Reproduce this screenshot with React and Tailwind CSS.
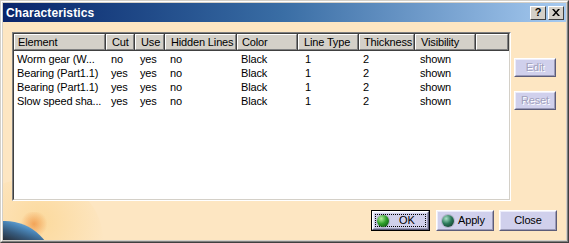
import React from "react";

const cols = [
  { h: "Element", w: "w-[92px]", pl: "pl-[3px]" },
  { h: "Cut", w: "w-[29px]", pl: "pl-[5px]" },
  { h: "Use", w: "w-[30px]", pl: "pl-[5px]" },
  { h: "Hidden Lines", w: "w-[72px]", pl: "pl-[5px]" },
  { h: "Color", w: "w-[61px]", pl: "pl-[4px]" },
  { h: "Line Type", w: "w-[61px]", pl: "pl-[5px]" },
  { h: "Thickness", w: "w-[56px]", pl: "pl-[4px]" },
  { h: "Visibility", w: "w-[61px]", pl: "pl-[5px]" },
];

const rows = [
  ["Worm gear (W...", "no", "yes", "no", "Black", "1", "2", "shown"],
  ["Bearing (Part1.1)", "yes", "yes", "no", "Black", "1", "2", "shown"],
  ["Bearing (Part1.1)", "yes", "yes", "no", "Black", "1", "2", "shown"],
  ["Slow speed sha...", "yes", "yes", "no", "Black", "1", "2", "shown"],
];

const dataPl = ["pl-[3px]", "pl-[5px]", "pl-[5px]", "pl-[5px]", "pl-[4px]", "pl-[7px]", "pl-[4px]", "pl-[5px]"];

function HeaderCell({ children, className }) {
  return (
    <div className={`${className} h-full flex items-center border-r border-b border-r-[#404040] border-b-[#404040] shrink-0`}>
      <div className="w-full h-full flex items-center overflow-hidden whitespace-nowrap border-t border-l border-t-white border-l-white border-r border-b border-r-[#808080] border-b-[#808080] bg-[#d4d0c8]">
        {children}
      </div>
    </div>
  );
}

function Button({ children, className = "", disabled, isDefault }) {
  const inner = (
    <div className="w-full h-full border border-t-white border-l-white border-r-[#5c5c78] border-b-[#5c5c78] bg-[#d0d0ec] flex items-center justify-center">
      <div className="w-full h-full border border-t-[#ececfa] border-l-[#ececfa] border-r-[#9a9ab8] border-b-[#9a9ab8] flex items-center justify-center">
        {children}
      </div>
    </div>
  );
  return (
    <div className={`${className} ${isDefault ? "border border-black" : ""} shrink-0 ${disabled ? "text-[#a0a0bc] [text-shadow:1px_1px_0_#ffffff]" : "text-black"}`}>
      {inner}
    </div>
  );
}

function Ball({ colors }) {
  return (
    <span
      className={`inline-block w-[12px] h-[12px] rounded-full ${colors} shadow-[0_0_0_1px_rgba(0,0,0,0.15)]`}
    />
  );
}

export default function App() {
  return (
    <div
      className="w-[569px] h-[243px] border border-t-[#d4d0c8] border-l-[#d4d0c8] border-r-[#404040] border-b-[#404040] text-[11px] leading-none text-black tracking-[-0.15px]"
      style={{ fontFamily: '"Liberation Sans", Arial, sans-serif' }}
    >
      <div className="w-full h-full border border-t-white border-l-white border-r-[#808080] border-b-[#808080] bg-[#d4d0c8] p-[1px] flex flex-col">
        {/* title bar */}
        <div className="h-[19px] shrink-0 flex items-center bg-gradient-to-r from-[#0a246a] via-[#3a6ea5] to-[#a6caf0] pl-[3px] pr-[2px]">
          <span className="text-white font-bold text-[12px] tracking-[0.1px]">Characteristics</span>
          <div className="ml-auto flex gap-[2px]">
            <div className="w-[16px] h-[14px] bg-[#d4d0c8] border border-t-white border-l-white border-r-[#404040] border-b-[#404040] flex items-center justify-center font-bold text-[11px]">?</div>
            <div className="w-[16px] h-[14px] bg-[#d4d0c8] border border-t-white border-l-white border-r-[#404040] border-b-[#404040] flex items-center justify-center">
              <svg width="8" height="7" viewBox="0 0 8 7">
                <path d="M0 0h2l2 2.5L6 0h2L5 3.5 8 7H6L4 4.5 2 7H0l3-3.5z" fill="#000" />
              </svg>
            </div>
          </div>
        </div>
        {/* body */}
        <div className="relative flex-1 overflow-hidden bg-[#fde6c2] flex flex-col pl-[9px] pt-[10px] pr-[8px]">
          {/* planet decoration */}
          <div className="absolute left-[-40px] bottom-[-60px] w-[140px] h-[120px] rounded-full bg-[radial-gradient(circle_at_55%_35%,rgba(250,205,120,0.5),rgba(253,230,194,0)_60%)]" />
          <div className="absolute left-[16px] bottom-[4px] w-[30px] h-[24px] rounded-full bg-[radial-gradient(circle,rgba(240,150,70,0.8),rgba(245,170,90,0)_70%)]" />
          <div className="absolute left-[-48px] bottom-[-81px] w-[100px] h-[100px] rounded-full bg-[linear-gradient(200deg,#b4def4_0%,#78b4e0_8%,#4a86b8_14%,#365a7c_20%,#262c36_28%)]" />

          <div className="relative flex">
            {/* table */}
            <div className="w-[499px] h-[169px] shrink-0 border border-t-[#808080] border-l-[#808080] border-r-white border-b-white">
              <div className="w-full h-full border border-t-[#404040] border-l-[#404040] border-r-[#d4d0c8] border-b-[#d4d0c8] bg-white flex flex-col">
                <div className="h-[17px] flex shrink-0">
                  {cols.map((c) => (
                    <HeaderCell key={c.h} className={c.w}>
                      <span className={c.pl}>{c.h}</span>
                    </HeaderCell>
                  ))}
                  <HeaderCell className="flex-1">
                    <span />
                  </HeaderCell>
                </div>
                <div className="flex flex-col pt-[1px]">
                  {rows.map((r, i) => (
                    <div key={i} className="h-[14px] flex items-center">
                      {r.map((v, j) => (
                        <div key={j} className={`${cols[j].w} ${dataPl[j]} shrink-0 whitespace-nowrap`}>
                          {v}
                        </div>
                      ))}
                    </div>
                  ))}
                </div>
              </div>
            </div>
            {/* side buttons */}
            <div className="ml-[3px] pt-[26px] flex flex-col gap-[14px]">
              <Button className="w-[42px] h-[19px]" disabled>Edit</Button>
              <Button className="w-[42px] h-[19px]" disabled>Reset</Button>
            </div>
          </div>

          {/* bottom buttons */}
          <div className="relative mt-[9px] flex justify-end pr-[1px]">
            <Button className="w-[59px] h-[21px]" isDefault>
              <div className="w-[51px] h-[13px] border border-dotted border-black flex items-center pl-[1px]">
                <Ball colors="bg-[radial-gradient(circle_at_35%_30%,#b8f0a0,#2ea02a_45%,#0c4a10_95%)]" />
                <span className="ml-[10px]">OK</span>
              </div>
            </Button>
            <Button className="w-[58px] h-[21px] ml-[6px]">
              <div className="flex items-center w-full pl-[4px]">
                <Ball colors="bg-[radial-gradient(circle_at_35%_30%,#a8e0c8,#2c7a5a_45%,#0c2e22_95%)]" />
                <span className="ml-[4px]">Apply</span>
              </div>
            </Button>
            <Button className="w-[58px] h-[21px] ml-[5px]">Close</Button>
          </div>
        </div>
      </div>
    </div>
  );
}
